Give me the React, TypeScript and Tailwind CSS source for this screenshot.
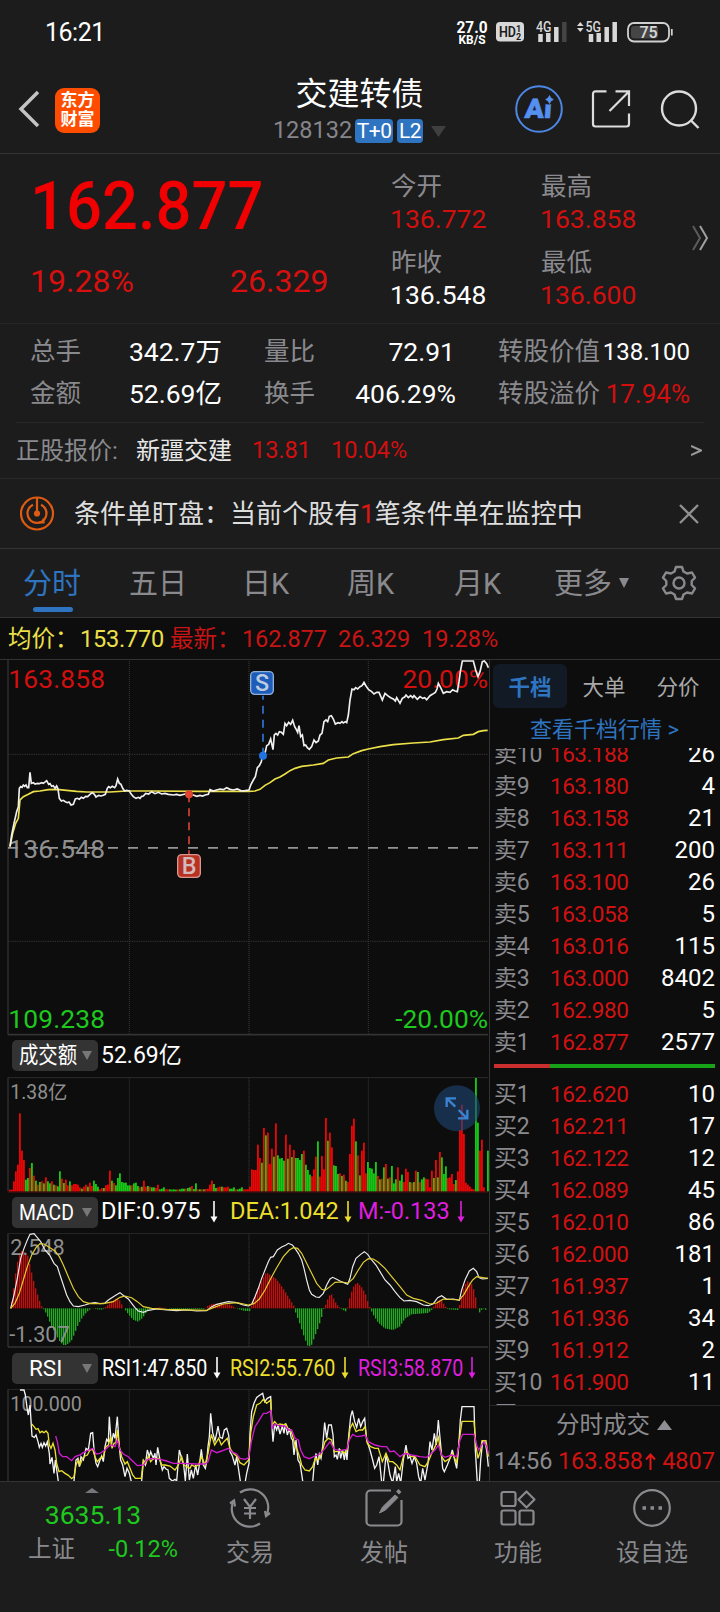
import type { ReactNode } from 'react';
import { clsx } from 'clsx';

// Chart coordinates are in thirds of a pixel, measured from the left edge of the screen.
const priceLine =
  '30,575 35,540 42,505 50,470 55,455 58,400 62,395 66,397 70,390 74,394 78,390 82,398 86,398 90,352 94,385 100,383 105,387 112,385 118,386 125,383 130,385 140,377 146,388 150,386 155,394 160,392 165,400 170,393 174,402 178,430 184,438 190,436 196,440 202,443 207,441 213,450 220,448 226,432 232,430 238,433 244,427 250,430 257,424 263,425 270,418 277,413 283,418 288,426 296,421 303,423 310,421 316,418 322,400 326,395 331,398 337,394 344,398 348,392 353,372 358,385 363,388 368,400 374,408 380,406 388,408 394,418 400,425 408,430 415,427 420,430 425,424 430,423 437,415 446,417 455,410 465,416 475,412 485,417 495,415 505,418 520,420 530,418 540,421 555,417 567,420 580,420 590,424 600,421 608,423 615,420 625,418 630,404 640,408 650,405 660,402 670,404 680,398 690,403 700,405 712,402 725,408 735,407 747,405 752,390 760,375 766,365 772,338 778,332 784,320 786,310 790,292 795,295 800,272 806,268 812,252 819,284 823,240 828,235 833,240 838,230 844,232 850,238 855,205 860,212 866,202 872,208 878,196 884,215 888,222 893,232 897,212 902,245 907,240 912,272 917,270 922,278 928,283 935,275 942,255 948,263 955,258 960,240 966,235 972,200 978,195 983,200 988,184 994,182 1000,192 1006,207 1014,203 1020,205 1026,200 1030,204 1036,200 1040,203 1045,180 1050,135 1056,102 1062,104 1067,98 1073,102 1080,95 1086,92 1092,82 1098,93 1106,104 1115,110 1122,117 1130,112 1137,112 1147,135 1155,115 1163,122 1172,128 1180,132 1186,138 1190,128 1200,145 1207,130 1214,126 1218,120 1225,128 1232,122 1238,128 1242,122 1252,133 1260,125 1268,130 1274,128 1280,134 1290,122 1297,118 1306,112 1311,102 1315,85 1322,98 1330,115 1340,110 1350,112 1358,104 1365,108 1372,110 1377,80 1381,50 1387,18 1420,18 1427,45 1434,65 1440,50 1447,20 1453,18 1460,26 1465,38';
const avgLine =
  '30,575 38,535 47,505 55,490 60,435 70,425 85,418 100,410 120,408 145,404 170,403 200,406 230,409 260,411 330,411 380,408 450,408 600,409 747,409 765,408 780,403 795,391 810,383 825,372 840,366 855,357 870,347 885,340 905,334 940,330 970,325 985,315 1010,309 1045,306 1060,296 1085,287 1105,282 1140,275 1180,269 1240,264 1290,261 1330,254 1375,249 1390,241 1420,238 1435,230 1450,227 1463,226';

// one bar per minute pair: r = up, g = down, followed by the bar height
const volume =
  'r5 r5 r30 r60 r80 r234 r122 r94 g35 g40 r70 g85 r47 g32 r20 g28 r30 g24 r42 g30 g24 r30 g20 r18 g15 g60 r38 g25 r35 r18 g30 r18 r22 r22 r20 r12 g8 r14 r20 g14 r26 r16 g32 g22 g14 r6 r10 g10 r18 r20 r62 g32 r25 g18 g40 g54 g28 g26 g26 g18 g18 r18 g24 g26 g16 r12 g14 r32 r14 g16 r14 g12 g12 r10 r20 g6 g8 g12 r6 r6 g6 g5 g6 g5 r6 g6 g8 g8 r8 g10 g12 r16 g7 g24 r6 g6 r6 g6 r7 r8 r20 r32 g22 g10 r12 r14 g14 r12 r12 r14 g8 g8 g12 r6 g6 g8 g12 r6 r6 r6 r14 r66 r64 r64 r140 r100 g86 r190 g168 r176 r82 r128 g104 r204 g108 g98 g100 g92 r170 g98 r140 g103 r124 g100 g100 g94 g112 r122 g80 g64 g50 r45 r66 r104 g150 r44 r106 r66 r220 g152 r176 r132 g78 g76 g52 r54 g46 r50 g32 r28 r112 r197 r218 g150 r108 g48 r122 r146 r54 g88 g70 g68 g54 g88 r46 g36 r38 g72 r82 g38 r42 g76 g24 g36 r72 g32 g50 r28 r68 r58 g28 r26 g28 r62 g58 r28 g36 g42 r38 r36 r12 r62 g40 r94 g42 r118 g102 g52 g75 r40 r42 r52 r22 g34 r60 r184 r260 r172 r26 r20 r14 r8 r6 g340 g206 r122 r155 r12 g0 g122'.split(
    ' ',
  );

const macdEnvelope =
  '30,0 36,20 42,60 50,120 58,160 66,172 75,168 84,158 92,125 100,90 108,60 116,35 124,10 130,0 134,-5 142,-20 150,-40 160,-62 170,-80 180,-98 190,-110 200,-110 215,-98 225,-75 235,-50 245,-32 255,-18 265,-8 275,-1 280,2 290,-3 310,-4 320,6 335,20 350,30 357,30 365,14 371,1 377,-5 385,-16 400,-34 415,-40 428,-30 440,-12 450,-3 465,1 480,3 495,1 520,-3 560,-4 615,-2 625,8 640,14 660,12 690,12 705,3 715,-2 735,-8 750,-8 754,2 762,25 775,55 790,90 800,108 812,100 830,88 845,68 860,45 872,25 882,8 887,-10 900,-45 915,-90 925,-114 935,-112 945,-85 955,-60 965,-30 972,-2 980,15 988,38 997,42 1005,22 1015,8 1025,-2 1040,-10 1045,5 1052,40 1062,65 1072,78 1085,65 1097,45 1107,12 1113,-3 1120,-18 1135,-42 1155,-60 1180,-65 1200,-55 1215,-32 1235,-18 1260,-16 1285,-14 1298,-3 1302,5 1312,20 1325,28 1335,8 1345,-3 1375,-5 1380,10 1390,55 1402,82 1415,75 1425,50 1433,5 1438,-15 1445,-5 1455,0 1463,-12'
    .split(' ')
    .map((p) => p.split(',').map(Number));

const difLine =
  '32,250 42,210 52,160 62,100 72,70 82,45 90,28 102,26 112,38 122,50 135,75 150,92 162,115 172,125 180,150 190,180 200,210 210,230 220,243 235,245 255,240 270,235 285,233 300,236 315,234 325,225 340,215 352,208 360,203 372,213 385,222 395,235 405,248 415,258 430,262 445,256 470,252 500,255 530,257 560,255 590,258 620,257 635,245 650,238 685,230 710,233 730,240 745,243 755,238 765,215 775,190 785,160 795,135 805,110 812,97 820,95 832,75 845,66 858,60 865,55 877,60 885,70 895,85 905,105 912,130 920,165 928,195 935,208 948,216 958,217 970,205 980,180 990,162 998,157 1010,163 1020,168 1035,175 1043,178 1050,160 1058,125 1068,100 1082,88 1093,80 1103,88 1115,105 1128,120 1140,140 1155,165 1170,180 1185,200 1200,218 1212,228 1230,226 1250,230 1270,240 1285,242 1300,236 1313,218 1325,212 1340,223 1360,222 1378,226 1385,195 1395,165 1408,138 1420,130 1430,140 1437,158 1447,162 1464,160';
const deaLine =
  '32,250 45,235 58,205 70,165 82,125 95,90 108,68 120,56 132,57 150,68 165,78 178,95 190,120 205,155 220,190 235,215 250,230 270,236 310,236 340,230 360,217 375,213 395,218 412,230 430,245 455,250 500,253 620,256 640,248 670,237 710,233 745,240 762,236 778,222 795,195 810,165 830,128 850,95 868,75 880,68 893,70 905,85 920,115 935,145 950,175 965,193 975,196 990,185 1005,172 1025,171 1045,174 1060,160 1075,135 1090,112 1105,101 1120,102 1135,112 1155,130 1175,155 1200,185 1220,210 1240,220 1265,226 1290,237 1310,234 1330,222 1378,225 1392,208 1405,185 1418,165 1430,155 1464,160';

const rsi1 =
  '60,120 72,120 76,135 82,180 85,195 90,165 96,258 103,262 108,255 114,275 118,292 123,280 127,292 132,278 137,288 142,275 148,310 150,342 156,322 162,370 166,330 175,395 180,440 215,440 222,393 228,330 234,325 238,350 243,320 250,330 258,295 265,300 272,250 278,248 283,310 288,340 293,350 300,330 305,318 310,335 315,290 320,268 325,275 328,200 334,285 340,250 345,265 352,200 357,280 362,330 368,345 375,380 381,355 388,370 394,395 400,430 420,430 425,393 430,335 436,345 442,300 448,320 452,305 460,325 465,310 468,345 473,292 480,330 487,360 492,350 498,357 504,360 508,385 517,393 525,388 530,393 538,300 546,330 551,345 556,393 562,312 568,390 574,360 580,385 587,345 593,375 598,345 604,298 610,345 616,355 620,335 624,290 628,260 632,190 638,248 645,272 650,250 654,228 660,262 667,265 673,240 680,235 686,255 690,305 697,318 705,345 710,320 716,360 722,400 735,400 740,370 747,340 750,250 755,185 762,160 770,142 780,135 788,130 794,155 802,145 812,140 815,220 819,275 824,225 830,240 834,225 840,252 847,228 852,250 856,220 862,255 868,235 874,265 878,270 882,315 888,270 894,330 900,340 905,372 912,420 936,420 942,350 948,310 953,345 958,312 963,325 968,290 974,218 980,265 986,225 994,225 999,255 1003,320 1008,315 1012,328 1018,295 1022,325 1028,300 1033,330 1037,300 1041,330 1046,260 1052,200 1057,182 1064,215 1070,232 1076,205 1082,230 1088,215 1094,205 1100,270 1110,300 1118,330 1124,355 1130,345 1137,320 1145,395 1150,400 1158,315 1164,340 1170,375 1178,400 1186,350 1190,395 1196,370 1202,400 1210,330 1218,285 1224,325 1230,320 1236,340 1243,320 1250,340 1256,380 1262,400 1268,355 1275,390 1284,340 1290,275 1296,300 1303,250 1309,285 1315,210 1322,285 1328,355 1333,365 1342,345 1350,325 1357,300 1364,330 1370,355 1376,290 1381,210 1386,170 1422,170 1426,300 1432,400 1438,395 1442,330 1448,275 1454,272 1460,300 1465,350';
const rsi2 =
  '95,222 102,230 108,238 114,236 120,248 126,244 132,248 138,243 144,250 148,285 153,295 159,280 165,300 170,340 177,365 185,362 195,370 205,376 215,386 222,380 228,345 235,330 240,345 248,325 255,318 262,315 270,300 278,298 285,320 292,335 300,325 310,320 318,290 325,285 332,260 336,295 342,280 348,278 352,240 358,290 365,320 375,342 382,335 390,355 398,375 406,385 424,385 430,330 438,340 445,318 452,335 460,325 470,325 478,325 485,345 495,345 510,348 525,360 535,345 545,320 552,345 560,350 570,355 575,345 585,350 595,345 605,320 615,345 624,310 634,253 644,285 650,275 656,265 664,285 672,275 682,265 690,295 700,310 712,320 720,338 732,345 746,330 752,250 760,200 770,165 780,160 790,148 800,160 812,150 816,225 824,215 832,225 840,222 850,225 858,222 866,240 872,240 880,265 886,290 892,300 900,325 905,345 915,360 928,363 938,350 946,325 955,330 965,310 975,275 985,265 995,270 1003,305 1012,305 1022,300 1032,310 1042,300 1050,235 1058,220 1068,245 1078,240 1088,240 1095,230 1102,280 1112,290 1125,295 1135,295 1147,335 1158,310 1168,335 1178,335 1190,345 1200,360 1210,320 1220,305 1232,320 1245,320 1260,345 1275,350 1285,335 1295,310 1305,290 1315,262 1325,320 1335,335 1350,325 1358,310 1370,340 1378,270 1386,214 1422,214 1428,290 1434,325 1442,300 1446,272 1458,272 1465,320';
const rsi3 =
  '167,258 172,275 178,310 188,320 200,320 215,332 225,320 240,315 250,308 265,300 280,295 288,312 300,310 315,300 325,290 335,285 345,290 352,270 360,300 370,312 385,320 400,335 412,347 430,345 440,330 455,325 480,328 500,333 520,340 550,340 590,342 615,342 624,335 634,300 650,308 665,303 685,295 695,305 710,312 720,325 735,328 746,323 754,275 765,230 775,215 790,190 800,190 813,182 816,235 825,222 840,228 855,228 865,240 875,240 885,265 895,270 902,300 912,320 928,326 945,318 960,312 975,295 990,275 1003,298 1020,302 1040,298 1048,270 1058,253 1070,260 1085,258 1095,255 1105,275 1125,285 1145,290 1160,290 1170,305 1182,303 1200,320 1215,310 1235,315 1260,320 1280,322 1295,310 1305,300 1315,285 1325,315 1335,322 1355,315 1370,320 1380,270 1388,253 1422,253 1430,285 1436,300 1445,285 1452,275 1460,290 1465,310';

const asks = [
  ['卖10', '163.188', '26'],
  ['卖9', '163.180', '4'],
  ['卖8', '163.158', '21'],
  ['卖7', '163.111', '200'],
  ['卖6', '163.100', '26'],
  ['卖5', '163.058', '5'],
  ['卖4', '163.016', '115'],
  ['卖3', '163.000', '8402'],
  ['卖2', '162.980', '5'],
  ['卖1', '162.877', '2577'],
];

const bids = [
  ['买1', '162.620', '10'],
  ['买2', '162.211', '17'],
  ['买3', '162.122', '12'],
  ['买4', '162.089', '45'],
  ['买5', '162.010', '86'],
  ['买6', '162.000', '181'],
  ['买7', '161.937', '1'],
  ['买8', '161.936', '34'],
  ['买9', '161.912', '2'],
  ['买10', '161.900', '11'],
  ['买11', '161.878', '4'],
];

function macdAt(x: number) {
  for (let i = 1; i < macdEnvelope.length; i++) {
    const [x0, y0] = macdEnvelope[i - 1];
    const [x1, y1] = macdEnvelope[i];
    if (x <= x1) return y0 + ((y1 - y0) * (x - x0)) / (x1 - x0);
  }
  return 0;
}

function StatusBar() {
  return (
    <div className="h-16 shrink-0 flex items-center pl-[45px] pr-[47px] text-white">
      <span className="text-[25px] leading-none tracking-[-0.500px]">16:21</span>
      <svg className="ml-auto" width="32" height="26" viewBox="0 0 32 26" fill="#fff" fontWeight="700">
        <text x="0.500" y="14" fontSize="16.500" textLength="31" lengthAdjust="spacingAndGlyphs">27.0</text>
        <text x="2.500" y="25.300" fontSize="13" textLength="27" lengthAdjust="spacingAndGlyphs">KB/S</text>
      </svg>
      <svg className="ml-[8px]" width="28" height="20" viewBox="0 0 28 20">
        <rect width="28" height="19.500" rx="4" fill="#d8d8d8" />
        <text x="3" y="15.300" fontSize="15.500" fontWeight="600" textLength="17" lengthAdjust="spacingAndGlyphs" fill="#1c1c1c">HD</text>
        <text x="20" y="9.500" fontSize="9" fontWeight="700" fill="#1c1c1c">1</text>
        <text x="20" y="18" fontSize="9" fontWeight="700" fill="#1c1c1c">2</text>
      </svg>
      <svg className="ml-[12px]" width="31" height="24" viewBox="0 0 31 24">
        <text x="0" y="11.500" fontSize="14" fontWeight="500" textLength="15.500" lengthAdjust="spacingAndGlyphs" fill="#d8d8d8">4G</text>
        <path d="M4.500 14v8M12.300 13v9M20.300 7v15" stroke="#d8d8d8" strokeWidth="4.500" />
        <path d="M28.300 2v20" stroke="#444" strokeWidth="4.500" />
      </svg>
      <svg className="ml-[10px]" width="41" height="24" viewBox="0 0 41 24">
        <path d="M0 6l3.300-4 3.300 4zM0 8h6.600L3.300 12z" fill="#d8d8d8" />
        <text x="8.500" y="11.500" fontSize="14" fontWeight="500" textLength="15.500" lengthAdjust="spacingAndGlyphs" fill="#d8d8d8">5G</text>
        <path d="M14 14v8M21.700 13v9M29.700 7v15M37.700 2v20" stroke="#d8d8d8" strokeWidth="4.500" />
      </svg>
      <svg className="ml-[9px]" width="46" height="22" viewBox="0 0 46 22">
        <rect x="1" y="2" width="41" height="18.500" rx="6" fill="none" stroke="#d0d0d0" strokeWidth="1.800" />
        <rect x="4" y="5" width="27" height="12.500" rx="3" fill="#454545" />
        <path d="M44.800 8v6.500" stroke="#d0d0d0" strokeWidth="1.800" />
        <text x="21.500" y="16.700" fontSize="16" fontWeight="500" textAnchor="middle" fill="#d8d8d8">75</text>
      </svg>
    </div>
  );
}

function Header() {
  return (
    <header className="h-[90px] shrink-0 flex border-b border-[#333]">
      <div className="w-[204px] flex items-center pl-[18px] pt-[1px]">
        <svg width="22" height="38" viewBox="0 0 22 38" fill="none" stroke="#c4c4c4" strokeWidth="3.500">
          <path d="M20 2L3 19l17 17" />
        </svg>
        <div className="ml-[15px] mt-0.5 w-[45px] h-[45px] rounded-[9px] bg-[#ff4d00] flex flex-col items-center justify-center text-white font-bold text-[17px] leading-[19px]">
          <span>东方</span>
          <span>财富</span>
        </div>
      </div>
      <div className="flex-1 flex flex-col items-center pt-[12px]">
        <h1 className="text-[32px] leading-[36px] text-white">交建转债</h1>
        <div className="mt-[7px] flex items-center text-[23.500px] leading-none text-[#85858a]">
          <span>128132</span>
          <span className="ml-[3px] h-6 w-[38px] rounded bg-[#2f74c0] text-white text-[21px] leading-6 text-center tracking-[-0.500px]">T+0</span>
          <span className="ml-1 h-6 w-[26px] rounded bg-[#2f74c0] text-white text-[21px] leading-6 text-center tracking-[-0.500px]">L2</span>
          <svg className="ml-2" width="15" height="11" viewBox="0 0 15 11">
            <path d="M0 0h15L7.500 11z" fill="#3f3f3f" />
          </svg>
        </div>
      </div>
      <div className="w-[205px] flex items-center pt-[1px]">
        <svg width="48" height="48" viewBox="0 0 48 48">
          <circle cx="24" cy="24" r="22.800" fill="none" stroke="#4d87e6" strokeWidth="2" />
          <text x="11.500" y="33" fontSize="27" fontWeight="900" textLength="27" lengthAdjust="spacingAndGlyphs" transform="skewX(-4)" fill="#5590f0" stroke="#5590f0" strokeWidth="0.600">Ai</text>
          <circle cx="33.500" cy="14" r="5.500" fill="#1c1c1c" />
          <path d="M34.500 10.500q.8 3 3.800 4-3 1-3.800 4-.8-3-3.800-4 3-1 3.800-4z" fill="#5590f0" stroke="#5590f0" strokeWidth="0.800" />
        </svg>
        <svg className="ml-[28px]" width="40" height="40" viewBox="0 0 40 40" fill="none" stroke="#dcdcdc" strokeWidth="2.200">
          <path d="M15.500 2.300H4.500a2.500 2.500 0 0 0-2.500 2.500V35a2.500 2.500 0 0 0 2.500 2.500h31A2.500 2.500 0 0 0 38 35V24.500" />
          <path d="M24.500 2.300H38V17M37.500 3L18.500 22" />
        </svg>
        <svg className="ml-[29px]" width="41" height="41" viewBox="0 0 41 41" fill="none" stroke="#dcdcdc" strokeWidth="2.400">
          <circle cx="19" cy="19.500" r="17" />
          <path d="M30.500 31l8 8" />
        </svg>
      </div>
    </header>
  );
}

function Stat({ label, value, red }: { label: string; value: string; red?: boolean }) {
  return (
    <div className="h-[76px]">
      <div className="text-[25.500px] leading-[32px] text-[#8a8a8e]">{label}</div>
      <div className={clsx('mt-px -ml-px text-[26.500px] leading-[32px]', red ? 'text-[#d20f0f]' : 'text-white')}>{value}</div>
    </div>
  );
}

function Quote() {
  return (
    <section className="h-[170px] shrink-0 flex border-b border-[#262626]">
      <div className="w-[391px] pl-[30px]">
        <div className="pt-[19px] text-[67px] leading-[66px] font-medium text-[#f00000] flex">
          <span className="origin-left scale-x-[.945]">162.877</span>
        </div>
        <div className="mt-[26px] flex text-[32px] leading-[32px] text-[#d80f0f]">
          <span className="w-[200px]">19.28%</span>
          <span>26.329</span>
        </div>
      </div>
      <div className="w-[150px] pt-[16px]">
        <Stat label="今开" value="136.772" red />
        <Stat label="昨收" value="136.548" />
      </div>
      <div className="w-[152px] pt-[16px]">
        <Stat label="最高" value="163.858" red />
        <Stat label="最低" value="136.600" red />
      </div>
      <svg className="mt-[71px] -ml-px" width="18" height="26" viewBox="0 0 18 26" fill="none" strokeWidth="2">
        <path d="M1 1l7 12-7 12" stroke="#5c5c5c" />
        <path d="M8 1l7 12-7 12" stroke="#a0a0a0" />
      </svg>
    </section>
  );
}

function Totals() {
  const rows = [
    ['总手', '342.7万', '量比', '72.91', '转股价值', '138.100'],
    ['金额', '52.69亿', '换手', '406.29%', '转股溢价', '17.94%'],
  ];
  return (
    <section className="mx-4 h-[99px] shrink-0 pt-[7px] border-b border-[#282828]">
      {rows.map((r, i) => (
        <div key={r[0]} className="h-[42px] flex items-center text-[25.500px] leading-none text-white whitespace-nowrap">
          <span className="w-[84px] pl-[14px] text-[#8a8a8e]">{r[0]}</span>
          <span className="w-[122px] text-right text-[26.500px]">{r[1]}</span>
          <span className="w-[93px] pl-[42px] text-[#8a8a8e]">{r[2]}</span>
          <span className={clsx('w-[141px] text-right text-[26.500px]', i === 0 && 'pr-[1px]')}>{r[3]}</span>
          <span className="ml-[42px] w-[104px] text-[#8a8a8e]">{r[4]}</span>
          <span className={clsx('flex-1 pr-[14px] text-right', i === 1 ? 'text-[26px] text-[#d20f0f]' : 'text-[24px]')}>{r[5]}</span>
        </div>
      ))}
    </section>
  );
}

function Underlying() {
  return (
    <div className="h-[56px] shrink-0 flex items-center px-4 border-b border-[#2a2a2a] text-[24px] leading-none">
      <span className="w-[120px] text-[#8a8a8e]">正股报价:</span>
      <span className="w-[116px] text-[#e8e8e8]">新疆交建</span>
      <span className="w-[79px] text-[#d20f0f] text-[23.500px]">13.81</span>
      <span className="text-[#d20f0f] text-[23.500px]">10.04%</span>
      <svg className="ml-auto mr-0.5" width="11" height="11" viewBox="0 0 11 11" fill="none" stroke="#9a9a9a" strokeWidth="2">
        <path d="M0 1l10 4.500L0 10" />
      </svg>
    </div>
  );
}

function Alert() {
  return (
    <div className="h-[70px] shrink-0 flex items-center pl-5 pr-[21px] border-b border-[#333]">
      <svg width="35" height="35" viewBox="0 0 35 35" fill="none" stroke="#dd5b12" strokeWidth="2.200">
        <circle cx="17" cy="17.500" r="16" />
        <path d="M13 8.700A9.500 9.500 0 1 0 21 8.700c5 2.500 6.500 8 4.500 13M17 2v15" />
        <path d="M19 26.500h4.500v-4" />
        <circle cx="17" cy="17.500" r="2" fill="#dd5b12" />
      </svg>
      <span className="ml-[19px] text-[26px] leading-none text-[#dedede] whitespace-nowrap">
        条件单盯盘：当前个股有<span className="text-[#e01515]">1</span>笔条件单在监控中
      </span>
      <svg className="ml-auto" width="20" height="20" viewBox="0 0 20 20" stroke="#909090" strokeWidth="2.400">
        <path d="M1 1l18 18M19 1L1 19" />
      </svg>
    </div>
  );
}

function PeriodTabs() {
  return (
    <nav className="h-[69px] shrink-0 pt-[3px] flex items-center border-b border-[#333] text-[29px] leading-none text-[#8a8a8e]">
      <span className="relative w-[129px] pl-[23px] text-[#2f74c0]">
        分时
        <i className="absolute left-[33px] top-[37px] w-10 h-[5px] rounded-full bg-[#2f74c0]" />
      </span>
      <span className="w-[113px]">五日</span>
      <span className="w-[105px]">日K</span>
      <span className="w-[107px]">周K</span>
      <span className="w-[100px]">月K</span>
      <span>更多</span>
      <svg className="ml-[7px] mt-[-3px]" width="10" height="10" viewBox="0 0 10 10">
        <path d="M0 0h10L5 10z" fill="#8a8a8e" />
      </svg>
      <svg className="ml-auto mr-[23px] mt-[-3px]" width="36" height="36" viewBox="0 0 36 36" fill="none" stroke="#8a8a8e" strokeWidth="2.400" strokeLinejoin="round">
        <path d="M15 2h6l1.500 4.500 3.500 2 5-1 3 5.200-3.300 3.300v4l3.300 3.300-3 5.200-5-1-3.500 2L21 34h-6l-1.500-4.500-3.500-2-5 1-3-5.200L5.300 20v-4L2 12.700l3-5.200 5 1 3.500-2z" />
        <circle cx="18" cy="18" r="5.500" />
      </svg>
    </nav>
  );
}

// vertical quarter lines shared by every chart
function Grid({ top, bottom }: { top: number; bottom: number }) {
  return (
    <g stroke="#3a3a3a" strokeWidth="3" fill="none">
      <path d={`M388 ${top}V${bottom}M1105 ${top}V${bottom}`} strokeDasharray="3 3" />
      <path d={`M747 ${top}V${bottom}`} strokeDasharray="3 3" strokeWidth="5" stroke="#2c2c2c" />
      <path d={`M24 ${top}V${bottom}`} stroke="#2b2b2b" strokeWidth="5" />
      <path d={`M24 ${top}H1464`} stroke="#2b2b2b" />
    </g>
  );
}

function PriceChart() {
  return (
    <svg className="block shrink-0" width="489" height="376" viewBox="0 15 1467 1128">
      <Grid top={12} bottom={1139} />
      <path d="M24 298H1464M24 859H1464" stroke="#353535" strokeWidth="3" strokeDasharray="4 3" />
      <path d="M24 1139H1464" stroke="#333" strokeWidth="5" />
      <g fontSize="79">
        <text x="25" y="99" textLength="290" fill="#d20f0f">163.858</text>
        <text x="1464" y="99" textAnchor="end" fill="#d20f0f">20.00%</text>
        <text x="25" y="608" textLength="290" fill="#8f8f8f">136.548</text>
        <text x="25" y="1119" textLength="290" fill="#1ec81e">109.238</text>
        <text x="1464" y="1119" textAnchor="end" fill="#1ec81e">-20.00%</text>
      </g>
      <path d="M24 578.500H1440" stroke="#949494" strokeWidth="5" strokeDasharray="30 30" />
      <polyline points={avgLine} fill="none" stroke="#ece04a" strokeWidth="5" />
      <polyline points={priceLine} fill="none" stroke="#f0f0f0" strokeWidth="5" />
      <path d="M567 418V598" stroke="#b23a2c" strokeWidth="6" strokeDasharray="24 18" />
      <circle cx="567" cy="418" r="12" fill="#e2452f" />
      <rect x="533" y="599" width="68" height="68" rx="12" fill="#b83223" stroke="#d9988f" strokeWidth="4" />
      <text x="567" y="658" textAnchor="middle" fontSize="70" fontWeight="500" fill="#d3b9b9">B</text>
      <path d="M789 122V302" stroke="#2a63b4" strokeWidth="6" strokeDasharray="24 18" strokeDashoffset="12" />
      <circle cx="789" cy="302" r="12" fill="#2273e0" />
      <rect x="752" y="50" width="68" height="68" rx="12" fill="#1d5cb8" stroke="#8fb0dc" strokeWidth="4" />
      <text x="786" y="109" textAnchor="middle" fontSize="70" fontWeight="500" fill="#bccbe0">S</text>
    </svg>
  );
}

function VolumeChart() {
  return (
    <svg className="block shrink-0" width="489" height="116" viewBox="0 50 1467 348">
      <Grid top={52} bottom={393} />
      <path d="M24 395H1464" stroke="#5a1010" strokeWidth="3" />
      {volume.map((v, i) => {
        const h = Number(v.slice(1));
        return <rect key={i} x={27 + i * 6} y={393 - h} width="5.500" height={h} fill={v[0] === 'r' ? '#e80606' : '#17c817'} />;
      })}
      <text x="31" y="117" fontSize="58" fill="#8f8f8f">1.38亿</text>
      <circle cx="1371" cy="144" r="69" fill="#1f4676" fillOpacity="0.600" />
      <g fill="none" stroke="#3b82d0" strokeWidth="7">
        <path d="M1340 140V114H1368M1341 115L1366 139M1402 148V174H1374M1376 149L1401 174" />
      </g>
    </svg>
  );
}

function MacdChart() {
  const bars = Array.from({ length: 240 }, (_, i) => 30 + i * 6);
  return (
    <svg className="block shrink-0" width="489" height="116" viewBox="0 24 1467 348">
      <Grid top={25} bottom={366} />
      <path d="M24 366H1464" stroke="#333" strokeWidth="5" />
      {bars.map((x) => {
        const h = macdAt(x);
        return (
          <rect key={x} x={x - 3} y={h > 0 ? 250 - h : 250} width="4" height={Math.abs(h)} fill={h > 0 ? '#c80c0c' : '#22aa22'} />
        );
      })}
      <text x="31" y="91" fontSize="65" fill="#8f8f8f">2.548</text>
      <text x="28" y="351" fontSize="65" fill="#8f8f8f">-1.307</text>
      <polyline points={difLine} fill="none" stroke="#ececec" strokeWidth="3.500" />
      <polyline points={deaLine} fill="none" stroke="#e2cf32" strokeWidth="3.500" />
    </svg>
  );
}

function RsiChart() {
  return (
    <svg className="block shrink-0" width="489" height="92" viewBox="0 117 1467 276">
      <Grid top={118} bottom={400} />
      <text x="31" y="182" fontSize="59" fill="#8f8f8f">100.000</text>
      <g fill="none" strokeWidth="4">
        <polyline points={rsi1} stroke="#f2f2f2" />
        <polyline points={rsi2} stroke="#ecdf2c" />
        <polyline points={rsi3} stroke="#cf1ccf" />
      </g>
    </svg>
  );
}

function DownArrow() {
  return (
    <svg width="8" height="22" viewBox="0 0 8 22" className="shrink-0">
      <path d="M4 0v18" stroke="currentColor" strokeWidth="1.600" />
      <path d="M0.500 15.500h7L4 21.500z" fill="currentColor" />
    </svg>
  );
}

function IndicatorBar({ name, narrow, height, children }: { name: string; narrow?: boolean; height: string; children: ReactNode }) {
  return (
    <div className={clsx('shrink-0 pb-[2px] flex items-center pl-3 text-[23px] leading-none text-white whitespace-nowrap', height)}>
      <div className="w-[86px] h-[31px] rounded-[5px] bg-[#333] flex items-center shrink-0">
        <div className={clsx('w-[70px] flex text-[22.500px]', narrow ? 'pl-[7px]' : 'pl-[17px]')}>
          <span className={clsx('origin-left', narrow && 'scale-x-[.86]')}>{name}</span>
        </div>
        <svg width="10" height="9" viewBox="0 0 10 9" className="shrink-0">
          <path d="M0 0h10L5 9z" fill="#777" />
        </svg>
      </div>
      {children}
    </div>
  );
}

function Charts() {
  return (
    <div className="w-[489px] flex flex-col shrink-0">
      <PriceChart />
      <IndicatorBar name="成交额" narrow height="h-[41px]">
        <span className="ml-[3px]">52.69亿</span>
      </IndicatorBar>
      <VolumeChart />
      <IndicatorBar name="MACD" narrow height="h-[40px]">
        <span className="ml-[3px] w-[109px] text-[23.500px]">DIF:0.975</span>
        <DownArrow />
        <span className="ml-[12px] w-[114px] text-[23.500px] text-[#ecdf2c]">DEA:1.042</span>
        <span className="text-[#ecdf2c]"><DownArrow /></span>
        <span className="ml-[6px] w-[99px] text-[23.500px] text-[#df1fdf]">M:-0.133</span>
        <span className="text-[#df1fdf]"><DownArrow /></span>
      </IndicatorBar>
      <MacdChart />
      <IndicatorBar name="RSI" height="h-[40px]">
        <span className="ml-[4px] w-[111px] flex"><span className="origin-left scale-x-[.855]">RSI1:47.850</span></span>
        <DownArrow />
        <span className="ml-[9px] w-[111px] flex text-[#ecdf2c]"><span className="origin-left scale-x-[.855]">RSI2:55.760</span></span>
        <span className="text-[#ecdf2c]"><DownArrow /></span>
        <span className="ml-[9px] w-[110px] flex text-[#df1fdf]"><span className="origin-left scale-x-[.855]">RSI3:58.870</span></span>
        <span className="text-[#df1fdf]"><DownArrow /></span>
      </IndicatorBar>
      <RsiChart />
    </div>
  );
}

function Level({ row }: { row: string[] }) {
  return (
    <div className="h-8 shrink-0 flex items-center leading-none">
      <span className="w-[56px] text-[23px] tracking-[-0.200px] text-[#8a8a8e] whitespace-nowrap">{row[0]}</span>
      <span className="text-[22.500px] tracking-[-0.500px] text-[#d01212]">{row[1]}</span>
      <span className="ml-auto text-[24px] text-white">{row[2]}</span>
    </div>
  );
}

function OrderBook() {
  return (
    <aside className="flex-1 flex flex-col border-l border-[#333]">
      <div className="mt-1 ml-[3px] h-[44px] shrink-0 flex items-center text-[21.500px] leading-none text-[#a8a8a8]">
        <span className="w-[74px] h-full pt-[3px] rounded-md bg-[#111a25] text-[#2f74c0] font-bold flex items-center justify-center">千档</span>
        <span className="w-[74px] pt-[3px] text-center">大单</span>
        <span className="w-[74px] pt-[3px] text-center">分价</span>
      </div>
      <div className="h-10 shrink-0 pt-1 flex items-center pl-[40px] text-[22px] leading-none text-[#2f74c0]">查看千档行情 &gt;</div>
      <div className="h-[657px] shrink-0 pl-[4px] pr-[5px] overflow-hidden flex flex-col">
        <div className="-mt-[10px] flex flex-col">
          {asks.map((r) => (
            <Level key={r[0]} row={r} />
          ))}
        </div>
        <div className="mt-[6px] h-1 shrink-0 flex">
          <span className="w-[56px] bg-[#c92f2f]" />
          <span className="flex-1 bg-[#17a317]" />
        </div>
        <div className="mt-[10px] flex flex-col">
          {bids.map((r) => (
            <Level key={r[0]} row={r} />
          ))}
        </div>
      </div>
      <div className="h-[39px] shrink-0 pt-[2px] flex items-center border-t border-[#262626] pl-[66px] text-[23.500px] leading-none text-[#8a8a8e]">
        分时成交
        <svg className="ml-[7px] mb-[3px]" width="15" height="10" viewBox="0 0 15 10">
          <path d="M0 10h15L7.500 0z" fill="#8f8f93" />
        </svg>
      </div>
      <div className="h-[32px] pt-[3px] flex items-center pl-[4px] pr-[5px] text-[23.500px] leading-none text-[#d01212]">
        <span className="w-[64px] text-[#8a8a8e]">14:56</span>
        <span className="tracking-[-0.100px]">163.858</span>
        <svg className="ml-0.5" width="11" height="17" viewBox="0 0 11 17" fill="none" stroke="#e01818" strokeWidth="2">
          <path d="M5.500 17V2M1 6.500L5.500 1.500 10 6.500" />
        </svg>
        <span className="ml-auto">4807</span>
      </div>
    </aside>
  );
}

function NavItem({ label, children }: { label: string; children: ReactNode }) {
  return (
    <div className="w-[134px] pt-[6px] flex flex-col items-center">
      <svg width="44" height="40" viewBox="0 0 44 40" fill="none" stroke="#8a8a8e" strokeWidth="2.200">
        {children}
      </svg>
      <span className="mt-[11px] text-[24px] leading-[28px] text-[#8a8a8e]">{label}</span>
    </div>
  );
}

function BottomNav() {
  return (
    <footer className="flex-1 flex border-t border-[#333] bg-[#1c1c1c]">
      <div className="w-[183px] flex flex-col items-center pt-[6px] text-[#1ec81e] leading-none">
        <svg width="14" height="5" viewBox="0 0 14 5">
          <path d="M0 5h14L7 0z" fill="#77777b" />
        </svg>
        <div className="mt-[7px] ml-[3px] text-[26.500px] leading-[30px]">3635.13</div>
        <div className="mt-[3px] w-full flex items-center pl-[28px] pr-[5px] text-[23.500px] leading-[32px]">
          <span className="text-[#8a8a8e]">上证</span>
          <span className="ml-auto">-0.12%</span>
        </div>
      </div>
      <NavItem label="交易">
        <path d="M12 4.500A18 18 0 0 1 38.500 27M32 35.500A18 18 0 0 1 5.500 13" />
        <path d="M2 15.500l4-3 1 6M42 25l-4 3-1-5" />
        <path d="M16 11l6 8 6-8M22 19v12M16 20h12M16 25.500h12" />
      </NavItem>
      <NavItem label="发帖">
        <path d="M29 2.500H8.500a4 4 0 0 0-4 4v27a4 4 0 0 0 4 4h27a4 4 0 0 0 4-4V12" />
        <path d="M17.500 25l3-6L33 7l3 2.500L23.500 22z" fill="#8a8a8e" strokeWidth="1" />
        <path d="M35.500 5l2.500-2.500" strokeWidth="4" />
      </NavItem>
      <NavItem label="功能">
        <rect x="5.500" y="4" width="14" height="14" rx="2" />
        <path d="M30.500 3.500l8 8-8 8-8-8z" strokeLinejoin="round" />
        <rect x="5.500" y="22.500" width="14" height="14" rx="2" />
        <rect x="23.500" y="22.500" width="14" height="14" rx="2" />
      </NavItem>
      <NavItem label="设自选">
        <circle cx="22" cy="20" r="17.800" />
        <path d="M12.500 20h3.500M20.500 20H24M28.500 20H32" strokeWidth="3.500" />
      </NavItem>
    </footer>
  );
}

export default function App() {
  return (
    <div className="w-[720px] h-[1612px] overflow-hidden flex flex-col bg-[#1c1c1c] font-[Roboto,'Noto_Sans_CJK_SC',sans-serif]">
      <StatusBar />
      <Header />
      <Quote />
      <Totals />
      <Underlying />
      <Alert />
      <PeriodTabs />
      <div className="h-[42px] shrink-0 pt-[2px] flex items-center pl-2 border-b border-[#333] bg-[#0d0d0d] text-[23.500px] leading-none whitespace-nowrap">
        <span className="w-[72px] text-[#ece04a]">均价：</span>
        <span className="w-[90px] text-[#ece04a] tracking-[-0.200px]">153.770</span>
        <span className="w-[72px] text-[#c81414]">最新：</span>
        <span className="w-[96px] text-[#c81414] tracking-[-0.100px]">162.877</span>
        <span className="w-[84px] text-[#c81414]">26.329</span>
        <span className="text-[#c81414]">19.28%</span>
      </div>
      <div className="h-[821px] shrink-0 flex bg-[#0d0d0d] overflow-hidden">
        <Charts />
        <OrderBook />
      </div>
      <BottomNav />
    </div>
  );
}
